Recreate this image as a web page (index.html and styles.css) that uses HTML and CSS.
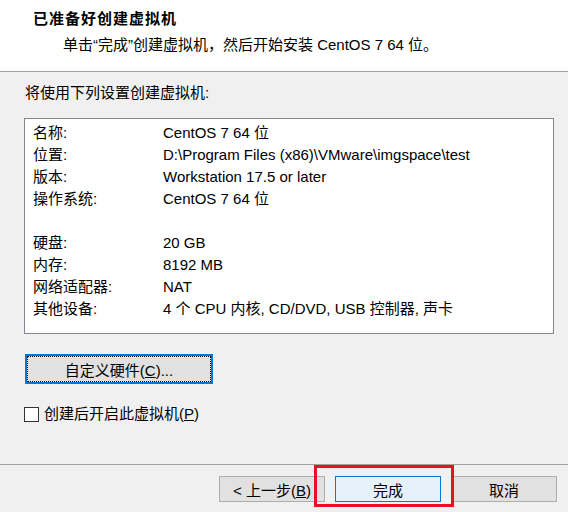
FILE: index.html
```html
<!DOCTYPE html>
<html lang="zh-CN">
<head>
  <meta charset="UTF-8">
  <title>新建虚拟机向导</title>
  <link rel="stylesheet" href="styles.css">
</head>
<body>
  <div class="wizard">
    <div class="header">
      <h1 class="title">已准备好创建虚拟机</h1>
      <p class="subtitle">单击“完成”创建虚拟机，然后开始安装 CentOS 7 64 位。</p>
    </div>

    <div class="main">
      <p class="prompt">将使用下列设置创建虚拟机:</p>

      <div class="summary">
        <div class="row"><span class="label">名称:</span><span>CentOS 7 64 位</span></div>
        <div class="row"><span class="label">位置:</span><span>D:\Program Files (x86)\VMware\imgspace\test</span></div>
        <div class="row"><span class="label">版本:</span><span>Workstation 17.5 or later</span></div>
        <div class="row"><span class="label">操作系统:</span><span>CentOS 7 64 位</span></div>
        <div class="row"></div>
        <div class="row"><span class="label">硬盘:</span><span>20 GB</span></div>
        <div class="row"><span class="label">内存:</span><span>8192 MB</span></div>
        <div class="row"><span class="label">网络适配器:</span><span>NAT</span></div>
        <div class="row"><span class="label">其他设备:</span><span>4 个 CPU 内核, CD/DVD, USB 控制器, 声卡</span></div>
      </div>

      <button class="btn btn-focus" type="button">自定义硬件(<u>C</u>)...</button>

      <label class="check">
        <span class="check-box"></span>
        <span>创建后开启此虚拟机(<u>P</u>)</span>
      </label>
    </div>

    <div class="footer">
      <button class="btn btn-nav" type="button">&lt; 上一步(<u>B</u>)</button>
      <button class="btn btn-nav btn-default" type="button">完成</button>
      <button class="btn btn-nav" type="button">取消</button>
    </div>

    <div class="highlight"></div>
  </div>
</body>
</html>
```

FILE: styles.css
```css
* {
  box-sizing: border-box;
  margin: 0;
  padding: 0;
}

body {
  background: #f0f0f0;
  font-family: "Liberation Sans", "Noto Sans CJK SC", sans-serif;
  font-size: 15px;
  color: #000;
}

.wizard {
  position: relative;
  width: 568px;
  height: 512px;
  display: flex;
  flex-direction: column;
}

.header {
  height: 72px;
  background: #fff;
  border-bottom: 1px solid #a0a0a0;
  padding: 9px 0 0 33px;
}

.title {
  font-size: 15px;
  font-weight: bold;
  line-height: 20px;
  letter-spacing: 1px;
}

.subtitle {
  margin-top: 6px;
  padding-left: 30px;
  line-height: 20px;
}

.main {
  flex: 1;
  padding: 11px 0 0 25px;
}

.prompt {
  line-height: 20px;
}

.summary {
  margin: 15px 0 0 -1px;
  width: 530px;
  height: 216px;
  background: #fff;
  border: 1px solid #828790;
  padding: 3px 0 0 8px;
}

.row {
  display: flex;
  height: 22px;
  line-height: 22px;
  white-space: nowrap;
}

.label {
  width: 130px;
}

.btn {
  font-family: inherit;
  font-size: 15px;
  color: #000;
  background: #e1e1e1;
  border: 1px solid #adadad;
  cursor: pointer;
}

.btn-focus {
  display: block;
  margin-top: 20px;
  width: 188px;
  height: 30px;
  border: 2px solid #0078d7;
  outline: 1px dotted #000;
  outline-offset: -3px;
}

.check {
  display: flex;
  align-items: center;
  gap: 5px;
  margin: 20px 0 0 -1px;
  line-height: 20px;
}

.check-box {
  width: 15px;
  height: 15px;
  background: #fff;
  border: 1px solid #333;
}

.footer {
  height: 48px;
  border-top: 1px solid #a0a0a0;
  padding: 11px 11px 0 0;
  display: flex;
  justify-content: flex-end;
  align-items: flex-start;
  gap: 10px;
}

.btn-nav {
  width: 106px;
  height: 26px;
}

.btn-default {
  background: #e5f1fb;
  border-color: #0078d7;
}

.highlight {
  position: absolute;
  left: 314px;
  top: 465px;
  width: 140px;
  height: 42px;
  border: 3px solid #e81123;
  pointer-events: none;
}
```
